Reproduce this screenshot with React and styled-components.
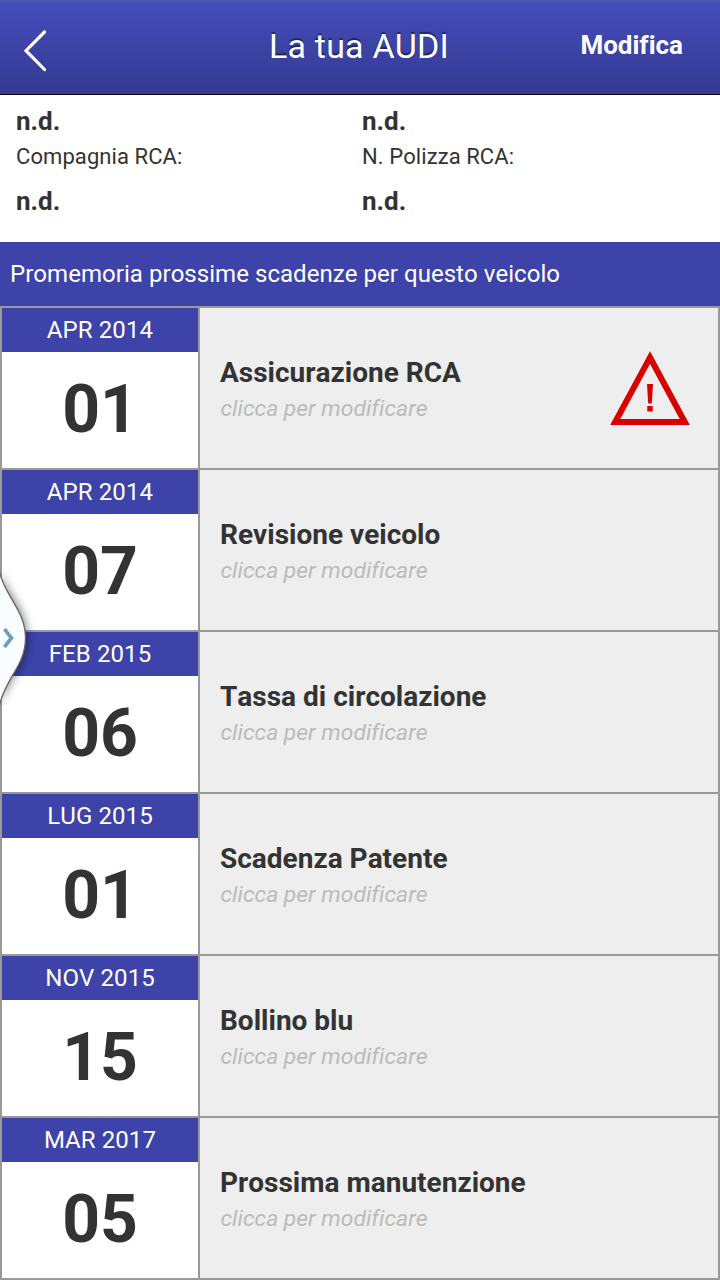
import React from 'react'
import styled, { createGlobalStyle } from 'styled-components'

const GlobalStyle = createGlobalStyle`
  *{
    box-sizing : border-box;
  }
  body{
    margin : 0;
    background : #fff;
    color : #333;
    font-family : Roboto, sans-serif;
    font-kerning : none;
    font-variant-ligatures : none;
  }
`
const Wrapper = styled.div`
  position : relative;
  width : 720px;
  height : 1280px;
  overflow : hidden;
`
const Header = styled.header`
  display : grid;
  grid-template-columns : 200px 1fr 200px;
  height : 95px;
  border-top : 3px solid #4c55b5;
  border-bottom : 1px solid #000;
  background : linear-gradient(#444cbb, #343a90);
  color : #fff;
`
const Back = styled.div`
  padding : 25px 0 0 22px;
  svg{
    display : block;
  }
`
const Title = styled.div`
  padding : 22px 2px 0 0;
  font-size : 34px;
  line-height : 42px;
  letter-spacing : 0.2px;
  text-align : center;
  text-shadow : 0 -2px 1px rgba(0, 0, 0, 0.45);
`
const Edit = styled.div`
  padding : 27px 37px 0 0;
  font-size : 26px;
  font-weight : 700;
  line-height : 30px;
  text-align : right;
`
const Details = styled.section`
  display : grid;
  grid-template-columns : 346px 1fr;
  height : 147px;
  padding : 11px 16px 0;
`
const Value = styled.div`
  font-size : 26px;
  font-weight : 700;
  line-height : 30px;
`
const Label = styled.div`
  padding : 6px 0 14px;
  font-size : 22px;
  line-height : 30px;
  letter-spacing : 0.08px;
`
const Banner = styled.div`
  height : 64px;
  padding-left : 10px;
  background : #3d43a8;
  color : #fff;
  font-size : 24px;
  line-height : 64px;
  letter-spacing : 0.045px;
`
const List = styled.div`
  border : 2px solid #999;
`
const Row = styled.div`
  display : grid;
  grid-template-columns : 198px 1fr;
  height : 162px;
  border-bottom : 2px solid #999;
  &:last-child{
    height : 160px;
    border-bottom : 0;
  }
`
const DateBox = styled.div`
  border-right : 2px solid #999;
  background : #fff;
  text-align : center;
`
const Month = styled.div`
  height : 44px;
  background : #3d43a8;
  color : #fff;
  font-size : 24px;
  line-height : 44px;
  letter-spacing : 0.1px;
`
const Day = styled.div`
  font-size : 66px;
  font-weight : 700;
  line-height : 116px;
`
const Info = styled.div`
  display : flex;
  align-items : center;
  justify-content : space-between;
  padding : 0 28px 0 20px;
  background : #eee;
`
const Texts = styled.div`
  padding-top : 6px;
`
const Name = styled.div`
  font-size : 28px;
  font-weight : 700;
  line-height : 36px;
`
const Hint = styled.div`
  padding-left : 0.5px;
  color : #bbb;
  font-size : 22.9px;
  font-style : italic;
  line-height : 36px;
`
const Handle = styled.div`
  position : absolute;
  left : 0;
  top : 560px;
  svg{
    display : block;
  }
`

const deadlines = [
  { month: 'APR 2014', day: '01', name: 'Assicurazione RCA', warning: true },
  { month: 'APR 2014', day: '07', name: 'Revisione veicolo' },
  { month: 'FEB 2015', day: '06', name: 'Tassa di circolazione' },
  { month: 'LUG 2015', day: '01', name: 'Scadenza Patente' },
  { month: 'NOV 2015', day: '15', name: 'Bollino blu' },
  { month: 'MAR 2017', day: '05', name: 'Prossima manutenzione' },
]

function Warning() {
  return (
    <svg width="80" height="76" viewBox="0 0 80 76">
      <path d="M40 7.5 L74.8 72 H5.2 Z" fill="none" stroke="#d90000" strokeWidth="6" />
      <path d="M37 34 H43 L41.8 53.5 H38.2 Z M37.3 56 H42.7 V61.5 H37.3 Z" fill="#d90000" />
    </svg>
  )
}

function App() {
  return (
    <Wrapper>
      <GlobalStyle />
      <Header>
        <Back>
          <svg width="26" height="46" viewBox="0 0 26 46">
            <path d="M22.5 4 L4 22.7 L22.5 41.5" fill="none" stroke="#fff" strokeWidth="3.2" strokeLinecap="round" />
          </svg>
        </Back>
        <Title>La tua AUDI</Title>
        <Edit>Modifica</Edit>
      </Header>
      <Details>
        <div>
          <Value>n.d.</Value>
          <Label>Compagnia RCA:</Label>
          <Value>n.d.</Value>
        </div>
        <div>
          <Value>n.d.</Value>
          <Label>N. Polizza RCA:</Label>
          <Value>n.d.</Value>
        </div>
      </Details>
      <Banner>Promemoria prossime scadenze per questo veicolo</Banner>
      <List>
        {deadlines.map((item) => (
          <Row key={item.name}>
            <DateBox>
              <Month>{item.month}</Month>
              <Day>{item.day}</Day>
            </DateBox>
            <Info>
              <Texts>
                <Name>{item.name}</Name>
                <Hint>clicca per modificare</Hint>
              </Texts>
              {item.warning && <Warning />}
            </Info>
          </Row>
        ))}
      </List>
      <Handle>
        <svg width="50" height="160" viewBox="0 0 50 160">
          <defs>
            <filter id="shade" x="-50%" y="-20%" width="220%" height="140%">
              <feGaussianBlur stdDeviation="5" />
            </filter>
          </defs>
          <path d="M0 10 C5 34 27 48 27 78 C27 108 5 120 0 148 Z" fill="#000" opacity="0.5" filter="url(#shade)" />
          <path d="M-1 10 C4 36 25.5 50 25.5 78 C25.5 106 5 118 -1 147 Z" fill="#fafdfd" stroke="#666" strokeWidth="1.3" />
          <path d="M4.5 69 Q8 74 11.5 78 Q8 82 4.5 87" fill="none" stroke="#699fb8" strokeWidth="3.6" />
        </svg>
      </Handle>
    </Wrapper>
  )
}

export default App
